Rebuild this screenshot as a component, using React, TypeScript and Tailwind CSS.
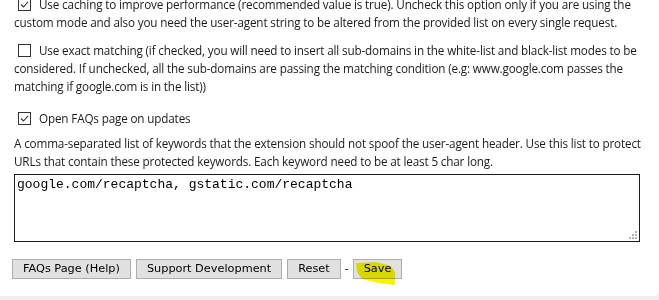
import React from "react";

function Box({ checked }: { checked: boolean }) {
  return (
    <svg width="13" height="13" viewBox="0 0 13 13" className="inline-block align-[-2px] ml-[4px] mr-[8px]">
      <rect x="0.5" y="0.5" width="12" height="12" fill="#fff" stroke="#333" strokeWidth="1" />
      {checked && <path d="M3 6.5 L5.5 9 L10 3.8" fill="none" stroke="#333" strokeWidth="1.1" />}
    </svg>
  );
}

export default function App() {
  const body =
    "font-['Open_Sans','Noto_Sans',sans-serif] text-[11.7px] tracking-[-0.15px] leading-[18px] text-[#1b1b1b] whitespace-nowrap";
  const btn =
    "h-[20px] px-[10px] border border-[#adadad] bg-[#e1e1e1] text-[11.3px] leading-[18px] text-black font-['DejaVu_Sans',sans-serif]";
  return (
    <div className="w-[659px] h-[300px] bg-[#efefef] overflow-hidden">
      <div className="relative w-[659px] h-[296px] bg-white rounded-br-[6px] overflow-hidden">
        <div className="pl-[14px] -mt-[5px]">
          <div className={body}>
            <Box checked />Use caching to improve performance (recommended value is true). Uncheck this option only if you are using the
            <br />
            custom mode and also you need the user-agent string to be altered from the provided list on every single request.
          </div>
          <div className={body + " mt-[10px]"}>
            <Box checked={false} />Use exact matching (if checked, you will need to insert all sub-domains in the white-list and black-list modes to be
            <br />
            considered. If unchecked, all the sub-domains are passing the matching condition (e.g: www.google.com passes the
            <br />
            matching if google.com is in the list))
          </div>
          <div className={body + " mt-[14px]"}>
            <Box checked />Open FAQs page on updates
          </div>
          <div className={body + " mt-[7px]"}>
            A comma-separated list of keywords that the extension should not spoof the user-agent header. Use this list to protect
            <br />
            URLs that contain these protected keywords. Each keyword need to be at least 5 char long.
          </div>
          <div className="relative mt-[4px] w-[626px] h-[68px] border border-[#1b1b1b] bg-white px-[2px] py-[2px]">
            <div className="font-['Liberation_Mono',monospace] text-[13px] leading-[16px] text-black whitespace-nowrap">
              google.com/recaptcha, gstatic.com/recaptcha
            </div>
            <svg width="8" height="8" viewBox="0 0 8 8" className="absolute right-[2px] bottom-[2px]">
              <rect x="6" y="0" width="2" height="2" fill="#b5b5b5" />
              <rect x="3" y="3" width="2" height="2" fill="#b5b5b5" />
              <rect x="6" y="3" width="2" height="2" fill="#b5b5b5" />
              <rect x="0" y="6" width="2" height="2" fill="#b5b5b5" />
              <rect x="3" y="6" width="2" height="2" fill="#b5b5b5" />
              <rect x="6" y="6" width="2" height="2" fill="#b5b5b5" />
            </svg>
          </div>
          <div className="mt-[17px] -ml-[2px] flex items-center">
            <button className={btn}>FAQs Page (Help)</button>
            <button className={btn + " ml-[5px]"}>Support Development</button>
            <button className={btn + " ml-[5px]"}>Reset</button>
            <span className="mx-[4px] text-[12px] font-['Open_Sans',sans-serif] text-[#1b1b1b]">-</span>
            <button className={btn + " px-[9px]"}>Save</button>
          </div>
        </div>
        <svg width="659" height="300" className="absolute left-0 top-0 pointer-events-none mix-blend-multiply">
          <polygon points="356,263 376,262 391,266 395,272 395,285 378,283 362,279 357,272" fill="#f5f500" />
        </svg>
      </div>
    </div>
  );
}
